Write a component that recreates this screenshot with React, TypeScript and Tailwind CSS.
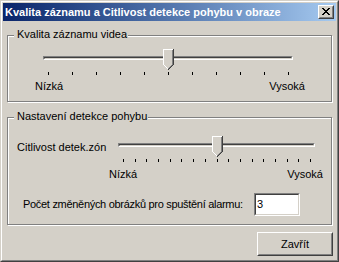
import React from "react"

const FACE = "#d4d0c8"

// 11x21 trackbar thumb, drawn pixel by pixel like the classic one
function Thumb() {
  const px: Array<[number, number, string]> = []
  for (let y = 0; y < 16; y++) {
    for (let x = 0; x < 11; x++) {
      let c = FACE
      if (x === 10) c = "#404040"
      else if (y === 0 || x === 0) c = "#ffffff"
      else if (x === 9) c = "#808080"
      px.push([x, y, c])
    }
  }
  for (let y = 16; y < 21; y++) {
    const l = y - 15
    const r = 25 - y
    for (let x = l; x <= r; x++) {
      let c = FACE
      if (x === r) c = "#404040"
      else if (x === l) c = "#ffffff"
      else if (x === r - 1) c = "#808080"
      px.push([x, y, c])
    }
  }
  return (
    <svg width="11" height="21" viewBox="0 0 11 21" shapeRendering="crispEdges" className="block">
      {px.map(([x, y, c], i) => (
        <rect key={i} x={x} y={y} width="1" height="1" fill={c} />
      ))}
    </svg>
  )
}

function Ticks({ width, count }: { width: number; count: number }) {
  return (
    <svg width={width} height="3" viewBox={`0 0 ${width} 3`} shapeRendering="crispEdges" className="block">
      {Array.from({ length: count }).map((_, i) => (
        <rect key={i} x={Math.round((i * (width - 1)) / (count - 1))} y="0" width="1" height="3" fill="#000" />
      ))}
    </svg>
  )
}

function Trackbar({ trackWidth, widthClass, ticks, value }: { trackWidth: number; widthClass: string; ticks: number; value: number }) {
  const span = trackWidth - 9
  const thumbLeft = Math.round((value * (span - 1)) / (ticks - 1))
  return (
    <div className={`relative ${widthClass} h-[26px] flex flex-col`}>
      {/* channel */}
      <div className="mt-[7px] h-[4px] border border-t-[#808080] border-l-[#808080] border-b-white border-r-white">
        <div className="h-full border border-t-[#404040] border-l-[#404040] border-b-[#d4d0c8] border-r-[#d4d0c8]"></div>
      </div>
      {/* ticks */}
      <div className="mt-[12px] ml-[5px]">
        <Ticks width={span} count={ticks} />
      </div>
      {/* thumb */}
      <div className="absolute top-0" style={{ left: thumbLeft }}>
        <Thumb />
      </div>
    </div>
  )
}

function GroupBox({ title, className, children }: { title: string; className: string; children: React.ReactNode }) {
  return (
    <div className={`relative border border-[#808080] shadow-[inset_1px_1px_0_#fff,1px_1px_0_#fff] ${className}`}>
      <span className="absolute top-[-8px] left-[6px] pl-[3px] pr-[1px] bg-[#d4d0c8] leading-[13px]">{title}</span>
      {children}
    </div>
  )
}

function CloseButton() {
  const x = [
    "XX    XX",
    " XX  XX ",
    "  XXXX  ",
    "   XX   ",
    "  XXXX  ",
    " XX  XX ",
    "XX    XX",
  ]
  return (
    <div className="w-[16px] h-[14px] border border-t-white border-l-white border-b-[#404040] border-r-[#404040]">
      <div className="w-full h-full border border-t-[#d4d0c8] border-l-[#d4d0c8] border-b-[#808080] border-r-[#808080] bg-[#d4d0c8] pl-[2px] pt-[1px]">
        <svg width="8" height="7" viewBox="0 0 8 7" shapeRendering="crispEdges" className="block">
          {x.map((row, y) =>
            row.split("").map((ch, i) => (ch === "X" ? <rect key={`${y}-${i}`} x={i} y={y} width="1" height="1" fill="#000" /> : null))
          )}
        </svg>
      </div>
    </div>
  )
}

export default function App() {
  return (
    <div className="w-[339px] h-[262px] border border-t-[#d4d0c8] border-l-[#d4d0c8] border-b-[#404040] border-r-[#404040] font-['Liberation_Sans',Arial,sans-serif] text-[11px] leading-[13px] text-black">
      <div className="h-full border border-t-white border-l-white border-b-[#808080] border-r-[#808080] bg-[#d4d0c8] p-px flex flex-col">
        {/* title bar */}
        <div className="h-[18px] flex items-center bg-linear-to-r from-[#0a246a] to-[#a6caf0] px-[2px]">
          <span className="flex-1 font-bold text-white whitespace-nowrap">Kvalita záznamu a Citlivost detekce pohybu v obraze</span>
          <CloseButton />
        </div>

        <div className="flex flex-col px-[4px]">
          {/* Kvalita záznamu videa */}
          <GroupBox title="Kvalita záznamu videa" className="mt-[14px] h-[67px]">
            <div className="pt-[13px] pl-[35px]">
              <Trackbar trackWidth={250} widthClass="w-[250px]" ticks={11} value={5} />
            </div>
            <div className="mt-[5px] pl-[27px] w-[297px] flex justify-between">
              <span>Nízká</span>
              <span>Vysoká</span>
            </div>
          </GroupBox>

          {/* Nastavení detekce pohybu */}
          <GroupBox title="Nastavení detekce pohybu" className="mt-[15px] h-[108px]">
            <div className="pt-[18px] flex items-start">
              <span className="ml-[9px] mt-[5px] w-[101px] whitespace-nowrap">Citlivost detek.zón</span>
              <Trackbar trackWidth={197} widthClass="w-[197px]" ticks={17} value={8} />
            </div>
            <div className="mt-[6px] pl-[101px] w-[315px] flex justify-between">
              <span>Nízká</span>
              <span>Vysoká</span>
            </div>
            <div className="mt-[12px] flex items-center">
              <span className="ml-[15px] w-[231px] whitespace-nowrap tracking-[-0.3px]">Počet změněných obrázků pro spuštění alarmu:</span>
              <div className="w-[46px] h-[23px] border border-t-[#808080] border-l-[#808080] border-b-white border-r-white">
                <div className="w-full h-full border border-t-[#404040] border-l-[#404040] border-b-[#d4d0c8] border-r-[#d4d0c8] bg-white pl-[1px] pt-[3px]">
                  3
                </div>
              </div>
            </div>
          </GroupBox>

          {/* Zavřít */}
          <div className="mt-[7px] flex justify-end -mr-px">
            <div className="w-[76px] h-[24px] border border-t-white border-l-white border-b-[#404040] border-r-[#404040]">
              <div className="w-full h-full border border-t-[#d4d0c8] border-l-[#d4d0c8] border-b-[#808080] border-r-[#808080] flex items-center justify-center">
                Zavřít
              </div>
            </div>
          </div>
        </div>
      </div>
    </div>
  )
}
